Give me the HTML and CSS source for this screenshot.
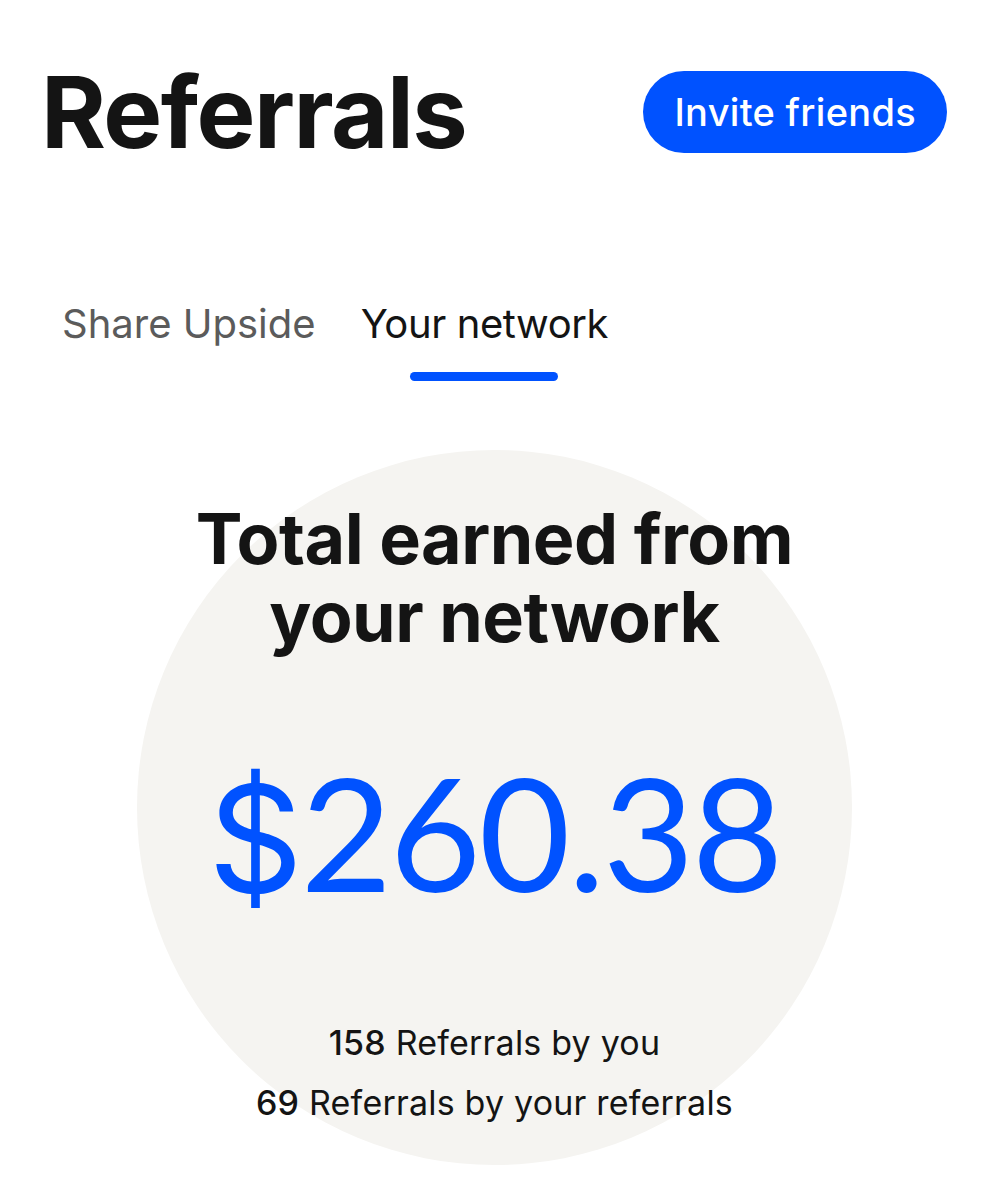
FILE: index.html
```html
<!DOCTYPE html>
<html lang="en">
  <head>
    <meta charset="utf-8">
    <title>Referrals</title>
    <meta name="viewport" content="width=device-width, initial-scale=1.0">
    <link rel="stylesheet" href="styles.css">
  </head>
  <body>
    <header class="page-head">
      <h1 class="page-title">Referrals</h1>
      <button class="invite-btn" type="button">Invite friends</button>
    </header>

    <nav class="tabs">
      <a class="tab" href="#">Share Upside</a>
      <a class="tab tab--active" href="#">Your network</a>
    </nav>

    <section class="earned">
      <h2 class="earned-title">Total earned from<br>your network</h2>
      <div class="earned-amount"><span class="currency">$</span>260.38</div>
      <ul class="earned-stats">
        <li><b>158</b> Referrals by you</li>
        <li><b>69</b> Referrals by your referrals</li>
      </ul>
    </section>
  </body>
</html>
```

FILE: styles.css
```css
body {
  margin: 0;
  font-family: Inter, 'Liberation Sans', sans-serif;
  color: #141414;
  background-color: #fff;
}
h1, h2, p, ul {
  margin: 0;
}

.page-head {
  display: flex;
  justify-content: space-between;
  align-items: center;
  padding: 63px 42px 0 41px;
}
.page-title {
  font-size: 99px;
  font-weight: 700;
  line-height: 1;
  letter-spacing: -1.5px;
}
.invite-btn {
  height: 82px;
  margin-top: -1px;
  padding: 0 31px;
  border: none;
  border-radius: 41px;
  background-color: #0052ff;
  color: #fff;
  font-family: inherit;
  font-size: 38px;
  font-weight: 500;
  letter-spacing: 0.3px;
}

.tabs {
  display: flex;
  gap: 45px;
  padding: 142px 0 0 62px;
}
.tab {
  position: relative;
  padding-bottom: 37px;
  color: #5b5b5b;
  font-size: 40px;
  line-height: 1;
  text-decoration: none;
}
.tab--active {
  color: #141414;
  letter-spacing: -0.4px;
}
.tab--active::after {
  content: '';
  position: absolute;
  left: 50%;
  bottom: 0;
  width: 148px;
  height: 9px;
  margin-left: -74px;
  border-radius: 5px;
  background-color: #0052ff;
}

.earned {
  box-sizing: border-box;
  width: 715px;
  height: 715px;
  margin: 69px auto 0;
  padding-top: 50px;
  border-radius: 50%;
  background-color: #f5f4f1;
  text-align: center;
}
.earned-title {
  font-size: 70px;
  font-weight: 700;
  line-height: 78px;
  letter-spacing: -0.5px;
}
.earned-amount {
  margin-top: 96px;
  color: #0052ff;
  font-family: Lato, 'Liberation Sans', sans-serif;
  font-size: 158px;
  line-height: 1;
  letter-spacing: -2.5px;
}
.currency {
  font-family: Inter, 'Liberation Sans', sans-serif;
  font-size: 148px;
}
.earned-stats {
  margin-top: 100px;
  padding: 0;
  list-style: none;
  font-size: 34px;
  line-height: 60px;
  letter-spacing: 0.2px;
}
.earned-stats b {
  font-weight: 500;
}
```
